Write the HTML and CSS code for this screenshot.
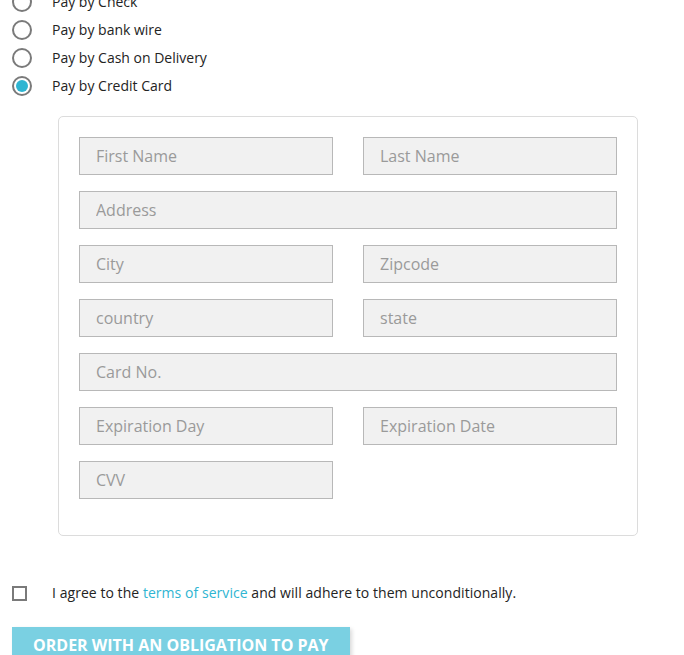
FILE: index.html
```html
<!DOCTYPE html>
<html>
<head>
<meta charset="utf-8">
<link rel="stylesheet" href="styles.css">
</head>
<body>
<div class="page">
  <div class="options">
    <label class="option"><span class="radio"></span><span class="opt-label">Pay by Check</span></label>
    <label class="option"><span class="radio"></span><span class="opt-label">Pay by bank wire</span></label>
    <label class="option"><span class="radio"></span><span class="opt-label">Pay by Cash on Delivery</span></label>
    <label class="option"><span class="radio checked"></span><span class="opt-label">Pay by Credit Card</span></label>
  </div>
  <div class="card">
    <div class="grid">
      <input class="field" placeholder="First Name">
      <input class="field" placeholder="Last Name">
      <input class="field wide" placeholder="Address">
      <input class="field" placeholder="City">
      <input class="field" placeholder="Zipcode">
      <input class="field" placeholder="country">
      <input class="field" placeholder="state">
      <input class="field wide" placeholder="Card No.">
      <input class="field" placeholder="Expiration Day">
      <input class="field" placeholder="Expiration Date">
      <input class="field" placeholder="CVV">
    </div>
  </div>
  <div class="agree">
    <span class="checkbox"></span>
    <span class="agree-text">I agree to the <a class="link">terms of service</a> and will adhere to them unconditionally.</span>
  </div>
  <button class="order">ORDER WITH AN OBLIGATION TO PAY</button>
</div>
</body>
</html>
```

FILE: styles.css
```css
html, body {
  margin: 0;
  padding: 0;
  background: #fff;
  overflow: hidden;
}
body {
  font-family: "Open Sans", "Noto Sans", sans-serif;
  color: #232323;
  font-size: 14px;
}
.page {
  margin-top: -12px;
  padding-left: 12px;
}
.options {
  display: flex;
  flex-direction: column;
}
.option {
  display: flex;
  align-items: center;
  height: 28px;
}
.radio {
  box-sizing: border-box;
  width: 20px;
  height: 20px;
  border: 2px solid #7a7a7a;
  border-radius: 50%;
  margin-right: 20px;
  position: relative;
  flex: none;
}
.radio.checked::after {
  content: "";
  position: absolute;
  left: 2px;
  top: 2px;
  width: 12px;
  height: 12px;
  border-radius: 50%;
  background: #2fb5d2;
}
.opt-label {
  line-height: 20px;
}
.card {
  margin-top: 16px;
  margin-left: 46px;
  width: 580px;
  box-sizing: border-box;
  border: 1px solid #dcdcdc;
  border-radius: 5px;
  padding: 20px 20px 36px 20px;
}
.grid {
  display: grid;
  grid-template-columns: 254px 254px;
  column-gap: 30px;
  row-gap: 16px;
}
.field {
  box-sizing: border-box;
  height: 38px;
  width: 100%;
  margin: 0;
  background: #f1f1f1;
  border: 1px solid #b8b8b8;
  padding: 0 16px;
  font-family: "Open Sans", "Noto Sans", sans-serif;
  font-size: 16px;
  color: #232323;
  outline: none;
}
.field::placeholder {
  color: #9a9a9a;
  opacity: 1;
}
.field.wide {
  grid-column: 1 / 3;
}
.agree {
  display: flex;
  align-items: center;
  margin-top: 48px;
  height: 18px;
}
.checkbox {
  box-sizing: border-box;
  width: 15px;
  height: 15px;
  border: 2px solid #7a7a7a;
  margin-right: 25px;
  flex: none;
}
.agree-text {
  line-height: 18px;
  letter-spacing: 0.05px;
}
.link {
  color: #2fb5d2;
  text-decoration: none;
}
.order {
  display: block;
  margin-top: 25px;
  width: 338px;
  height: 44px;
  border: none;
  background: #7ad0e2;
  color: #fff;
  font-family: "Open Sans", "Noto Sans", sans-serif;
  font-weight: 700;
  font-size: 16px;
  line-height: 22px;
  text-align: left;
  padding: 0 0 8px 21px;
  box-shadow: 2px 2px 4px rgba(0, 0, 0, 0.15);
}
```
